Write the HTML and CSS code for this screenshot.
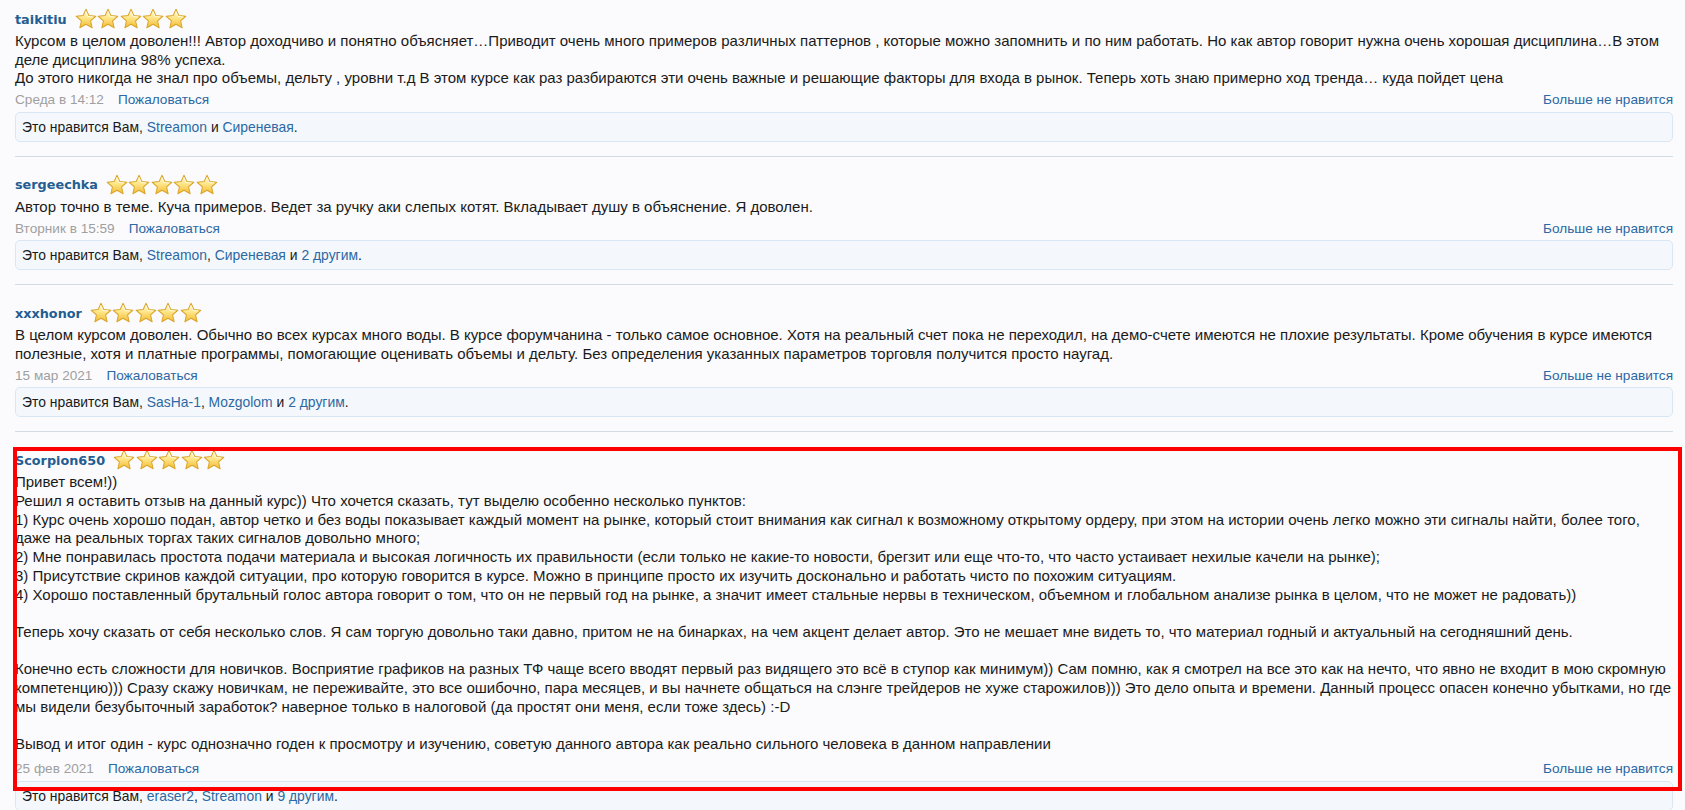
FILE: index.html
```html
<!DOCTYPE html>
<html>

	<head>
		<meta charset="UTF-8">
		<title>Отзывы</title>
		<link rel="stylesheet" href="styles.css">
	</head>

	<body>
		<svg class="defs" width="0" height="0">
			<defs>
				<linearGradient id="starFill" x1="0" y1="0" x2="0" y2="1">
					<stop offset="0" stop-color="#fffbe6" />
					<stop offset="0.45" stop-color="#ffe78c" />
					<stop offset="1" stop-color="#f2bb33" />
				</linearGradient>
				<symbol id="star" viewBox="0 0 24 24">
					<path d="M12 1.3l3.1 6.95 7.6.75-5.7 5.05 1.7 7.5L12 17.7l-6.7 3.85 1.7-7.5L1.3 9l7.6-.75z" fill="url(#starFill)" stroke="#d9a52c" stroke-width="1.1" stroke-linejoin="round" />
					<path d="M12 4.2l2.2 5 5.2.5" fill="none" stroke="#fffdf2" stroke-width="1" stroke-linecap="round" opacity="0.8" />
				</symbol>
			</defs>
		</svg>

		<div class="comments">

			<div class="comment">
				<div class="head">
					<a class="user" href="#">taikitiu</a>
					<span class="stars">
						<svg><use href="#star" /></svg><svg><use href="#star" /></svg><svg><use href="#star" /></svg><svg><use href="#star" /></svg><svg><use href="#star" /></svg>
					</span>
				</div>
				<div class="text">
					Курсом в целом доволен!!! Автор доходчиво и понятно объясняет…Приводит очень много примеров различных паттернов , которые можно запомнить и по ним работать. Но как автор говорит нужна очень хорошая дисциплина…В этом деле дисциплина 98% успеха.<br>
					До этого никогда не знал про объемы, дельту , уровни т.д В этом курсе как раз разбираются эти очень важные и решающие факторы для входа в рынок. Теперь хоть знаю примерно ход тренда… куда пойдет цена
				</div>
				<div class="meta">
					<span class="date">Среда в 14:12</span>
					<a href="#" class="report">Пожаловаться</a>
					<a href="#" class="unlike">Больше не нравится</a>
				</div>
				<div class="likes">Это нравится Вам, <a href="#">Streamon</a> и <a href="#">Сиреневая</a>.</div>
			</div>

			<div class="comment">
				<div class="head">
					<a class="user" href="#">sergeechka</a>
					<span class="stars">
						<svg><use href="#star" /></svg><svg><use href="#star" /></svg><svg><use href="#star" /></svg><svg><use href="#star" /></svg><svg><use href="#star" /></svg>
					</span>
				</div>
				<div class="text">
					Автор точно в теме. Куча примеров. Ведет за ручку аки слепых котят. Вкладывает душу в объяснение. Я доволен.
				</div>
				<div class="meta">
					<span class="date">Вторник в 15:59</span>
					<a href="#" class="report">Пожаловаться</a>
					<a href="#" class="unlike">Больше не нравится</a>
				</div>
				<div class="likes">Это нравится Вам, <a href="#">Streamon</a>, <a href="#">Сиреневая</a> и <a href="#">2 другим</a>.</div>
			</div>

			<div class="comment">
				<div class="head">
					<a class="user" href="#">xxxhonor</a>
					<span class="stars">
						<svg><use href="#star" /></svg><svg><use href="#star" /></svg><svg><use href="#star" /></svg><svg><use href="#star" /></svg><svg><use href="#star" /></svg>
					</span>
				</div>
				<div class="text">
					В целом курсом доволен. Обычно во всех курсах много воды. В курсе форумчанина - только самое основное. Хотя на реальный счет пока не переходил, на демо-счете имеются не плохие результаты. Кроме обучения в курсе имеются полезные, хотя и платные программы, помогающие оценивать объемы и дельту. Без определения указанных параметров торговля получится просто наугад.
				</div>
				<div class="meta">
					<span class="date">15 мар 2021</span>
					<a href="#" class="report">Пожаловаться</a>
					<a href="#" class="unlike">Больше не нравится</a>
				</div>
				<div class="likes">Это нравится Вам, <a href="#">SasHa-1</a>, <a href="#">Mozgolom</a> и <a href="#">2 другим</a>.</div>
			</div>

			<div class="comment marked">
				<div class="head">
					<a class="user" href="#">Scorpion650</a>
					<span class="stars">
						<svg><use href="#star" /></svg><svg><use href="#star" /></svg><svg><use href="#star" /></svg><svg><use href="#star" /></svg><svg><use href="#star" /></svg>
					</span>
				</div>
				<div class="text">
					Привет всем!))<br>
					Решил я оставить отзыв на данный курс)) Что хочется сказать, тут выделю особенно несколько пунктов:<br>
					1) Курс очень хорошо подан, автор четко и без воды показывает каждый момент на рынке, который стоит внимания как сигнал к возможному открытому ордеру, при этом на истории очень легко можно эти сигналы найти, более того, даже на реальных торгах таких сигналов довольно много;<br>
					2) Мне понравилась простота подачи материала и высокая логичность их правильности (если только не какие-то новости, брегзит или еще что-то, что часто устаивает нехилые качели на рынке);<br>
					3) Присутствие скринов каждой ситуации, про которую говорится в курсе. Можно в принципе просто их изучить досконально и работать чисто по похожим ситуациям.<br>
					4) Хорошо поставленный брутальный голос автора говорит о том, что он не первый год на рынке, а значит имеет стальные нервы в техническом, объемном и глобальном анализе рынка в целом, что не может не радовать))<br>
					<br>
					Теперь хочу сказать от себя несколько слов. Я сам торгую довольно таки давно, притом не на бинарках, на чем акцент делает автор. Это не мешает мне видеть то, что материал годный и актуальный на сегодняшний день.<br>
					<br>
					Конечно есть сложности для новичков. Восприятие графиков на разных ТФ чаще всего вводят первый раз видящего это всё в ступор как минимум)) Сам помню, как я смотрел на все это как на нечто, что явно не входит в мою скромную компетенцию))) Сразу скажу новичкам, не переживайте, это все ошибочно, пара месяцев, и вы начнете общаться на слэнге трейдеров не хуже старожилов))) Это дело опыта и времени. Данный процесс опасен конечно убытками, но где мы видели безубыточный заработок? наверное только в налоговой (да простят они меня, если тоже здесь) :-D<br>
					<br>
					Вывод и итог один - курс однозначно годен к просмотру и изучению, советую данного автора как реально сильного человека в данном направлении
				</div>
				<div class="meta">
					<span class="date">25 фев 2021</span>
					<a href="#" class="report">Пожаловаться</a>
					<a href="#" class="unlike">Больше не нравится</a>
				</div>
				<div class="likes">Это нравится Вам, <a href="#">eraser2</a>, <a href="#">Streamon</a> и <a href="#">9 другим</a>.</div>
			</div>

		</div>
	</body>

</html>
```

FILE: styles.css
```css
body {
	margin: 0;
	background-color: #fbfbfd;
	color: #1a1a1a;
	font-family: "Liberation Sans", Arial, sans-serif;
	font-size: 13.6px;
	overflow: hidden;
}

a {
	color: #2c68a3;
	text-decoration: none;
}

.defs {
	position: absolute;
}

.comments {
	padding: 8px 12px 0 15px;
}

.comment {
	position: relative;
	padding-bottom: 14px;
	border-bottom: 1px solid #d3dce5;
}

.comment + .comment {
	padding-top: 17px;
}

.head {
	display: flex;
	align-items: center;
	height: 22px;
	margin-bottom: 2px;
}

.head .user {
	font-family: "DejaVu Sans", Verdana, sans-serif;
	font-weight: bold;
	font-size: 12.8px;
	color: #245d91;
}

.stars {
	display: flex;
	margin-left: 8px;
}

.stars svg {
	width: 22px;
	height: 22px;
	margin-right: 0.5px;
}

.text {
	font-size: 15px;
	line-height: 18.7px;
}

.meta {
	display: flex;
	margin-top: 3px;
	line-height: 18.7px;
}

.meta .date {
	color: #9f9f9f;
}

.meta .report {
	margin-left: 14px;
}

.meta .unlike {
	margin-left: auto;
}

.likes {
	height: 28px;
	line-height: 28px;
	margin-top: 2px;
	padding: 0 6px;
	border: 1px solid #d9e7f4;
	border-radius: 5px;
	background-color: #f4f8fc;
	font-size: 13.9px;
}

.marked .meta {
	margin-top: 6px;
}

/* рамка-пометка поверх отзыва */
.marked::after {
	content: "";
	position: absolute;
	top: 15px;
	left: -2px;
	right: -9px;
	height: 336px;
	border: 4px solid #ff0000;
}
```
